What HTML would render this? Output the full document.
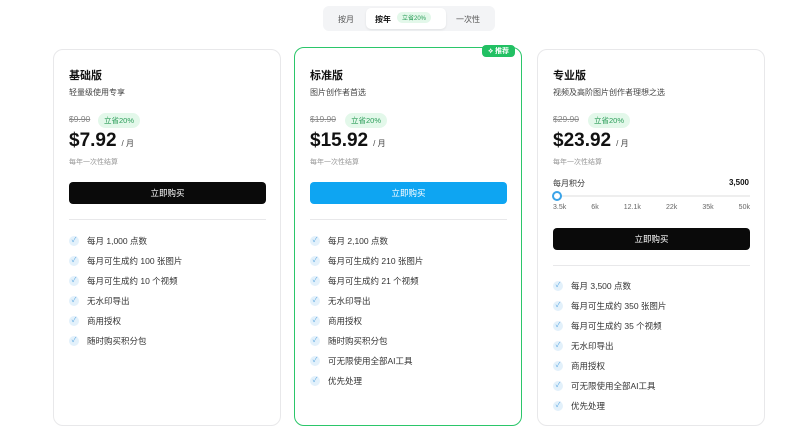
<!DOCTYPE html><html><head><meta charset="utf-8"><style>
*{box-sizing:border-box;margin:0;padding:0}
body{width:800px;height:441px;background:#fff;font-family:"Liberation Sans","Noto Sans CJK SC",sans-serif;color:#111;position:relative;overflow:hidden}
.tabs{position:absolute;left:323px;top:6px;width:172px;height:25px;background:#f3f4f6;border-radius:6px;font-size:8px;color:#555}
.tabs span{position:absolute;top:8px}
.act{position:absolute;left:43px;top:2px;width:80px;height:21px;background:#fff;border-radius:5px;box-shadow:0 1px 2px rgba(0,0,0,.08)}
.card{position:absolute;top:49px;width:228px;height:377px;border:1px solid #e8e8ea;border-radius:10px;background:#fff}
.card.g{border:1.5px solid #2bc66a;top:47px;height:379px}
.t{position:absolute;left:15px;font-size:11px;font-weight:bold}
.s{position:absolute;left:15px;font-size:8px;color:#444}
.old{position:absolute;left:15px;font-size:8.5px;color:#888;text-decoration:line-through}
.badge{position:absolute;font-size:7.5px;color:#2a9d58;background:#e3f8ea;border-radius:8px;padding:2px 6px}
.p{position:absolute;left:15px;font-size:19px;font-weight:bold}
.p small{font-size:8px;font-weight:normal;color:#444;margin-left:5px}
.n{position:absolute;left:15px;font-size:7px;color:#999}
.btn{position:absolute;left:15px;width:197px;height:22px;border-radius:4px;background:#0a0a0a;color:#fff;font-size:8.5px;text-align:center;line-height:22px}
.hr{position:absolute;left:15px;width:197px;height:1px;background:#e8e8ea}
ul{position:absolute;left:15px;list-style:none;font-size:8.5px;color:#333}
li{height:20px;display:flex;align-items:center}
li:before{content:"✓";width:10px;height:10px;border-radius:50%;background:#e3f1fb;color:#5aa7e0;font-size:7px;line-height:10px;text-align:center;margin-right:8px}
</style></head><body>
<div class="tabs"><div class="act"></div><span style="left:15px">按月</span><span style="left:52px;color:#111;font-weight:bold">按年</span><span style="left:74px;top:6px;font-size:6px;color:#2a9d58;background:#e3f8ea;border-radius:6px;padding:1px 5px">立省20%</span><span style="left:133px">一次性</span></div>

<div class="card" style="left:53px">
<div class="t" style="top:17px">基础版</div><div class="s" style="top:37px">轻量级使用专享</div>
<div class="old" style="top:64px">$9.90</div><div class="badge" style="left:44px;top:63px">立省20%</div>
<div class="p" style="top:80px">$7.92<small>/ 月</small></div>
<div class="n" style="top:107px">每年一次性结算</div>
<div class="btn" style="top:132px">立即购买</div><div class="hr" style="top:169px"></div>
<ul style="top:181px"><li>每月 1,000 点数</li><li>每月可生成约 100 张图片</li><li>每月可生成约 10 个视频</li><li>无水印导出</li><li>商用授权</li><li>随时购买积分包</li></ul>
</div>

<div class="card g" style="left:294px">
<div style="position:absolute;right:6px;top:-3px;background:#22c063;color:#fff;font-size:7px;padding:1px 6px;border-radius:4px;font-weight:bold">⟡ 推荐</div>
<div class="t" style="top:19px">标准版</div><div class="s" style="top:39px">图片创作者首选</div>
<div class="old" style="top:66px">$19.90</div><div class="badge" style="left:50px;top:65px">立省20%</div>
<div class="p" style="top:82px">$15.92<small>/ 月</small></div>
<div class="n" style="top:109px">每年一次性结算</div>
<div class="btn" style="top:134px;background:#0ea5f2">立即购买</div><div class="hr" style="top:171px"></div>
<ul style="top:183px"><li>每月 2,100 点数</li><li>每月可生成约 210 张图片</li><li>每月可生成约 21 个视频</li><li>无水印导出</li><li>商用授权</li><li>随时购买积分包</li><li>可无限使用全部AI工具</li><li>优先处理</li></ul>
</div>

<div class="card" style="left:537px">
<div class="t" style="top:17px">专业版</div><div class="s" style="top:37px">视频及高阶图片创作者理想之选</div>
<div class="old" style="top:64px">$29.90</div><div class="badge" style="left:50px;top:63px">立省20%</div>
<div class="p" style="top:80px">$23.92<small>/ 月</small></div>
<div class="n" style="top:107px">每年一次性结算</div>
<div style="position:absolute;left:15px;top:128px;font-size:8px;color:#333">每月积分</div>
<div style="position:absolute;right:15px;top:128px;font-size:8px;font-weight:bold">3,500</div>
<div style="position:absolute;left:15px;top:145px;width:197px;height:2px;background:#eee"></div>
<div style="position:absolute;left:14px;top:141px;width:10px;height:10px;border-radius:50%;border:2px solid #3aa3e8;background:#fff"></div>
<div style="position:absolute;left:15px;top:154px;width:197px;font-size:7px;color:#666;display:flex;justify-content:space-between"><span>3.5k</span><span>6k</span><span>12.1k</span><span>22k</span><span>35k</span><span>50k</span></div>
<div class="btn" style="top:178px">立即购买</div><div class="hr" style="top:215px"></div>
<ul style="top:226px"><li>每月 3,500 点数</li><li>每月可生成约 350 张图片</li><li>每月可生成约 35 个视频</li><li>无水印导出</li><li>商用授权</li><li>可无限使用全部AI工具</li><li>优先处理</li></ul>
</div>
</body></html>
